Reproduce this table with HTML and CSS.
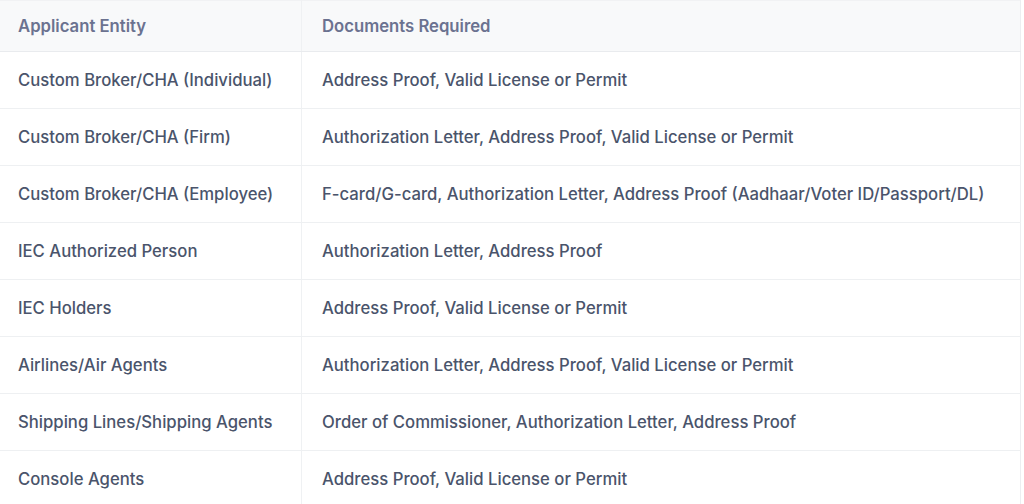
FILE: index.html
```html
<!DOCTYPE html>
<html lang="en">
<head>
<meta charset="utf-8">
<title>Documents Required</title>
<link rel="stylesheet" href="styles.css">
</head>
<body>
<table class="docs">
  <thead>
    <tr><th class="c1">Applicant Entity</th><th class="c2">Documents Required</th></tr>
  </thead>
  <tbody>
    <tr><td class="c1">Custom Broker/CHA (Individual)</td><td class="c2">Address Proof, Valid License or Permit</td></tr>
    <tr><td class="c1">Custom Broker/CHA (Firm)</td><td class="c2">Authorization Letter, Address Proof, Valid License or Permit</td></tr>
    <tr><td class="c1">Custom Broker/CHA (Employee)</td><td class="c2">F-card/G-card, Authorization Letter, Address Proof (Aadhaar/Voter ID/Passport/DL)</td></tr>
    <tr><td class="c1">IEC Authorized Person</td><td class="c2">Authorization Letter, Address Proof</td></tr>
    <tr><td class="c1">IEC Holders</td><td class="c2">Address Proof, Valid License or Permit</td></tr>
    <tr><td class="c1">Airlines/Air Agents</td><td class="c2">Authorization Letter, Address Proof, Valid License or Permit</td></tr>
    <tr><td class="c1">Shipping Lines/Shipping Agents</td><td class="c2">Order of Commissioner, Authorization Letter, Address Proof</td></tr>
    <tr><td class="c1">Console Agents</td><td class="c2">Address Proof, Valid License or Permit</td></tr>
  </tbody>
</table>
</body>
</html>
```

FILE: styles.css
```css
html, body {
  margin: 0;
  padding: 0;
  background: #ffffff;
}
body {
  font-family: Inter, "Noto Sans", sans-serif;
  font-size: 16.7px;
  color: #4a546b;
}
.docs {
  width: 1021px;
  border-collapse: collapse;
  table-layout: fixed;
  border-top: 1px solid #f1f2f4;
  border-right: 1px solid #eceef1;
}
.docs th, .docs td {
  text-align: left;
  white-space: nowrap;
  padding: 0 20px;
  border-bottom: 1px solid #eef0f2;
}
.docs th {
  height: 50px;
  background: #f8f9fa;
  color: #6b7290;
  font-weight: 600;
  border-bottom: 1px solid #e9ebee;
}
.docs td {
  height: 56px;
  font-weight: 500;
}
.docs .c1 {
  width: 263px;
  padding-left: 18px;
  border-right: 1px solid #eff1f3;
}
.docs .c2 {
  padding-left: 20px;
}
```
